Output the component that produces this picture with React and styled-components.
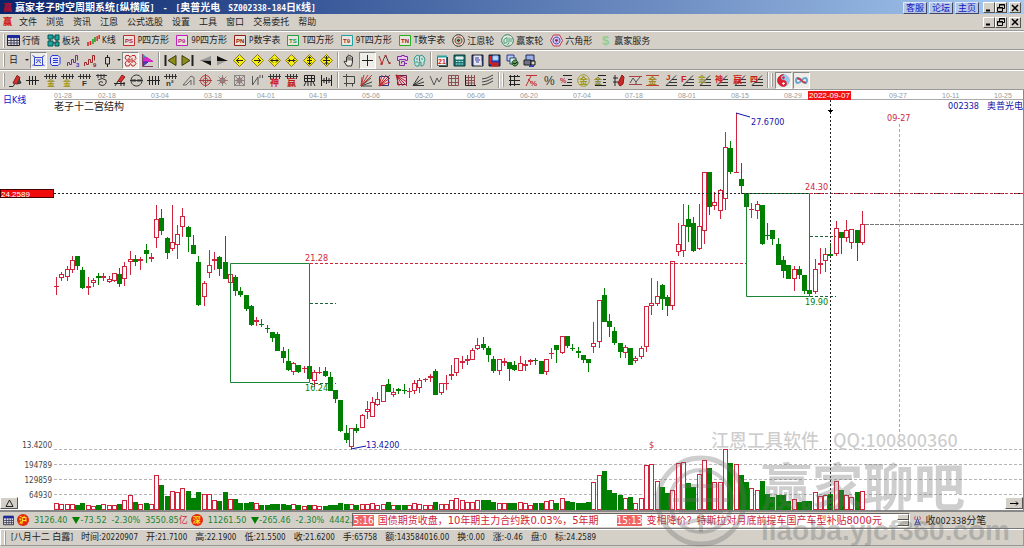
import React from "react";
import styled, { createGlobalStyle, css } from "styled-components";

const face = "#d4d0c8";
const green = "#008000";
const red = "#d0243c";
const blue = "#1414a8";

const latinFont = `"DejaVu Sans Condensed", "DejaVu Sans", sans-serif`;
const cjkFont = `"Noto Sans CJK SC", sans-serif`;

// each candle: kind (r = rise, g = fall), body top, body bottom, high, low
const candles = `
r286,287,277,295 r274,278,272,281 r269,277,266,281 r260,270,256,273 g256,266,256,270 g270,288,267,289
r286,288,277,295 r280,283,278,287 g276,278,273,285 r276,278,273,281 r279,282,276,283 r273,281,273,282
g274,284,268,287 r266,279,262,286 r259,262,251,275 g259,262,255,266 r259,261,257,270 g250,254,244,263
r257,259,253,262 r219,238,205,248 g218,231,209,235 g238,253,237,259 r242,249,205,251 r234,245,225,259
r216,227,208,237 g227,237,226,252 g245,254,235,254 g262,305,256,306 r283,297,281,306 r265,273,250,278
r259,261,252,270 g257,269,256,276 g262,279,236,279 r274,283,274,283 g277,291,275,296 g291,295,287,297
g295,309,295,311 g306,325,305,326 r320,322,317,326 g324,325,319,327 g328,329,325,333 g332,338,332,342
g334,351,332,351 g351,358,347,363 g361,370,349,371 r363,372,362,375 g365,372,365,373 r368,369,366,373
g366,379,366,381 r372,381,370,387 r372,373,367,374 g371,376,367,377 g377,391,372,391 g390,399,390,403
g400,431,400,432 g433,440,425,443 r428,447,428,449 g428,431,424,433 r415,428,414,428 r409,412,401,419
r402,417,397,417 r399,405,392,406 r385,402,385,402 g384,392,379,392 r392,395,388,397 g389,391,388,394
g390,391,384,394 r391,392,388,398 r383,391,380,394 r380,388,378,393 r379,380,378,382 r376,378,374,382
g371,395,369,395 r383,393,383,395 r383,384,375,390 r374,376,365,380 r358,373,358,376 r361,363,356,369
r359,361,355,365 r350,360,348,360 r345,349,338,350 g344,348,337,350 g348,355,346,362 g359,371,356,373
r359,371,359,375 r361,363,358,366 g362,369,362,381 g365,370,361,371 r363,371,356,371 r364,366,360,371
r360,362,359,365 g360,361,358,365 g361,374,361,374 r359,372,359,375 r353,354,348,359 g345,350,345,363
r336,353,336,354 g336,346,336,348 g348,349,344,351 g351,353,347,358 g355,360,355,363 g359,363,359,372
r343,347,322,353 r300,342,300,348 g295,322,288,322 g321,327,314,337 g331,343,327,345 g343,352,343,358
r347,353,345,358 g348,365,348,365 r358,361,356,363 r348,357,346,359 r306,347,306,352 r303,306,278,315
r296,304,281,306 g285,299,284,310 g297,306,295,316 r261,306,261,310 r244,252,223,256 r225,251,204,257
g219,227,205,242 g223,251,217,252 r226,249,204,250 r172,231,172,244 g172,207,172,215 r202,206,192,210
r190,211,189,219 r147,199,132,210 g148,172,141,174 r172,173,113,173 g179,186,163,194 g193,207,193,207
r209,210,203,218 r204,211,201,219 g205,244,205,245 g235,236,223,240 g230,239,230,245 g244,265,238,265
g260,271,256,278 g265,279,265,279 r269,279,266,291 g269,275,266,279 g275,291,275,294 g290,294,289,296
r269,292,259,294 r263,265,248,274 r254,261,248,272 g254,256,243,256 r228,254,221,256 g232,238,232,254
r230,238,220,242 r229,243,229,249 g230,243,230,261 r224,243,211,245`
    .trim()
    .split(/\s+/)
    .map((item) => {
        const [top, bottom, high, low] = item.slice(1).split(",").map(Number);
        return { rise: item[0] === "r", top, bottom, high, low };
    });

const volumes = [
    6, 5, 5, 5, 4, 6, 4, 3, 4, 5, 4, 4, 5, 9, 14, 7, 5, 6, 5, 34, 24, 13, 18,
    17, 21, 18, 11, 17, 15, 15, 9, 8, 17, 10, 10, 6, 6, 7, 6, 4, 4, 5, 5, 5, 4,
    5, 4, 3, 4, 4, 3, 3, 4, 4, 6, 5, 5, 4, 5, 5, 6, 4, 5, 7, 4, 4, 4, 4, 6, 5,
    4, 4, 7, 5, 5, 9, 11, 9, 7, 7, 9, 9, 9, 7, 6, 6, 6, 6, 7, 6, 4, 6, 6, 8, 9,
    6, 11, 8, 7, 6, 6, 7, 27, 34, 38, 19, 16, 14, 11, 12, 6, 11, 44, 45, 28,
    22, 16, 19, 46, 47, 26, 22, 35, 49, 41, 27, 27, 60, 46, 45, 34, 27, 21, 19,
    28, 15, 12, 14, 14, 8, 10, 7, 8, 8, 17, 13, 14, 15, 28, 19, 14, 12, 17, 18,
];

const dates = [
    [54, "01-28"],
    [98, "02-18"],
    [151, "03-04"],
    [204, "03-18"],
    [257, "04-01"],
    [309, "04-19"],
    [362, "05-06"],
    [415, "05-20"],
    [467, "06-06"],
    [520, "06-20"],
    [573, "07-04"],
    [625, "07-18"],
    [678, "08-01"],
    [731, "08-15"],
    [784, "08-29"],
    [889, "09-27"],
    [942, "10-11"],
    [994, "10-25"],
];

const barX = (i) => Math.round(56 + (i * 806) / 153);

// chinese and latin runs get their own font and size
function Mixed({ children, latin = 8 }) {
    return String(children)
        .split(/([\x20-\x7e]+)/)
        .filter(Boolean)
        .map((part, i) =>
            /[\x20-\x7e]/.test(part) ? (
                <Latin key={i} $size={latin}>
                    {part}
                </Latin>
            ) : (
                <span key={i}>{part}</span>
            ),
        );
}

// icon drawings on a 13 x 13 grid: path, stroke, fill, stroke width
const P = (d, stroke = "#222", fill = "none", w = 1) => (
    <path key={d + stroke} d={d} stroke={stroke} fill={fill} strokeWidth={w} />
);
const T = (text, x, y, color, size = 7, weight = "bold") => (
    <text
        key={text + x}
        x={x}
        y={y}
        fill={color}
        fontSize={size}
        fontWeight={weight}
        fontFamily='"Liberation Sans", "Noto Sans CJK SC", sans-serif'
    >
        {text}
    </text>
);
const badge = (text, color, ink) => [
    P("M.5 1.5h11v10H.5z", color, "#e8e4dc"),
    T(text, 2, 9, ink, 6),
];
const diamond = (d) => [
    P("M6.5 .5L12.5 6.5 6.5 12.5 .5 6.5z", "#8a7a10", "#f6ee10"),
    P(d, "#222"),
];
const comb = "M0 2.5h13M2.5 0v5M5.5 0v5M8.5 0v5M11.5 0v5";
const fan = "M1 11.5h11M1 11.5L12 8M1 11.5L11 4M1 11.5L7 2";
const steps = "M2 11.5h11M5 8.5h8M8 5.5h5M2 11.5L12 1.5";

const glyphs = {
    table: [
        P("M.5 1.5h12v10H.5z", "#222", "#dde"),
        P("M1 2.5h11", "#1a2a9a", "none", 3),
        P("M1 6.5h11M1 9h11M4 4v7M7 4v7M10 4v7", "#445"),
    ],
    blocks: [
        P("M1 1h5v4H1zM8 1h4v5H8zM1 7h5v5H1zM8 8h4v4H8z", "#055", "#18a8a0"),
        P("M3 5v2M6 9h2M6 3h2M10 6v2", "#222"),
    ],
    kline: [
        P("M1 8v4M3.5 7v4", "#e02020", "none", 1.6),
        P("M6 5v5M8 3v5", "#20a020", "none", 1.6),
        P("M10.2 2v5M12.2 1v4", "#e02020", "none", 1.4),
    ],
    ps: badge("PS", "#c03030", "#c02020"),
    p9: badge("P9", "#c020c0", "#b02090"),
    pn: badge("PN", "#902020", "#902020"),
    ts: badge("TS", "#20a040", "#209040"),
    t9: badge("T9", "#20a0a0", "#a03030"),
    tn: badge("TN", "#20b020", "#a02020"),
    wheel: [
        P("M6.5 .7a5.8 5.8 0 1 0 .01 0z", "#333", "#ecd8c8"),
        P("M6.5 3a3.5 3.5 0 1 0 .01 0z", "#a03030", "#a8c8a8"),
        P("M6.5 5.5a1 1 0 1 0 .01 0z", "#333", "#a03030"),
    ],
    winwheel: [
        P("M6.5 .7a5.8 5.8 0 1 0 .01 0z", "#388068", "#e4e8dc"),
        P("M3 5.5l3-2v5l-3 1zM8 3.5v5q0 2-2 2M10 4v4", "#48a078"),
    ],
    hexagon: [
        P("M3.5 1h6l3 5.5-3 5.5h-6L.5 6.5z", "#c03040", "#e8dce8"),
        P("M6.5 3a3.5 3.5 0 1 0 .01 0z", "#3040c0", "#c8c8f0"),
        P("M6.5 5.5a1 1 0 1 0 .01 0z", "#a02060", "#a02060"),
    ],
    dollar: [T("$", 3, 11, "#8cd08c", 13)],

    bluebox: [
        P("M2.5 3.5h8v8h-8zM.5 1.5l3 2M12.5 1.5l-3 2M.5 12l2-2M12.5 12l-2-2", "#3848d0"),
        P("M4 6h5M4 9l2.5-2L9 9", "#3848d0"),
    ],
    scroll: [
        P("M3 1.5h6l2 2v6l-2 2H3l-1.5-2v-6z", "#2838d8", "#e4e4f8"),
        P("M4 4.5h5M4 6.5h5M4 8.5h5", "#2838d8"),
    ],
    steps3: [
        P("M.5 12V8.5h2v2h2v-5h2v3h2v-7h2v5", "#7a2a8a"),
        T("3", 9, 13, "#3838c0", 6),
    ],
    steps9: [
        P("M.5 12V8.5h2v2h2v-5h2v3h2v-7h2v5", "#a02828"),
        T("9", 9, 13, "#882222", 6),
    ],
    candle: [P("M6.5 1v2.5M6.5 10v3M4.5 3.5h4V10h-4z", "#222")],
    dragon: [
        P("M2 1.5h3l1 2 2-2h3l1 3-2 2 2 3-2 2.5H8l-1.5-2.5L5 12H2L1 9l2-2.5L1 4z", "#c02828", "#f4e0dc"),
        P("M4 5h2v3H4zM8 4v5M8 7h2", "#c02828"),
    ],
    flag: [
        P("M2 .5l5 5H2z", "#10a0a0", "#10b0b0"),
        P("M5 3l7 4.5H2V5z", "#d020c0", "#d828d0"),
        P("M2 8h5l-5 4z", "#4030a0", "#5040c0"),
        P("M1.5 0v12.5H12", "#804070"),
    ],
    first: [
        P("M1.5 1v11", "#222", "none", 2),
        P("M12 1.5v10l-8-5z", "#3c3c10", "#8c8c18"),
    ],
    last: [
        P("M11.5 1v11", "#222", "none", 2),
        P("M1 1.5v10l8-5z", "#3c3c10", "#8c8c18"),
    ],
    prev: [P("M11.5 2v9", "#888"), P("M12 6.5v5L1 6z", "none", "#111"), P("M12 2v5L1 6.5z", "none", "#999")],
    next: [P("M1.5 2v9", "#888"), P("M1 6.5v5L12 6z", "none", "#999"), P("M1 2v5l11 0z", "none", "#111")],
    d1: diamond("M3 6.5h7M6 4L3.5 6.5 6 9"),
    d2: diamond("M3 6.5h7M7 4l2.5 2.5L7 9"),
    d3: diamond("M2.5 6.5h8M5 4.5l-2 2 2 2M8 4.5l2 2-2 2"),
    d4: diamond("M2.5 6.5h8M3.5 4.5l2 2-2 2M9.5 4.5l-2 2 2 2"),
    d5: diamond("M6.5 2.5v8M4.5 4.5l2-2 2 2M4 6.5h5M4.5 8.5l2 2 2-2"),
    d6: diamond("M6.5 2v9M4.5 3l2 2 2-2M3 6.5h7M4.5 10l2-2 2 2"),
    hand: [
        P("M4 12L1 7.5q1-1 2.5.5V3q1-1 1.5 0V1.5q1-1 1.5 0V2q1-1 1.5 0v1q1-1 1.5 0v5l-1 4z", "#333", "#ece8e0"),
        P("M5 3v3.5M7 3v3.5M9 4v3", "#333"),
    ],
    cross: [P("M6.5 1v11M1 6.5h11", "#222")],
    wave: [
        P("M1 2l3 8 2-6", "#c02828"),
        P("M6 4l2-2 2 5 2 3", "#333"),
        P("M3.5 9v2M7.5 1v2M11.5 8v2", "#c02828", "none", 2),
    ],
    maze: [
        P("M1.5 2.5h4v-1h3v1h3v4h-2v-1h-6v1h-2z", "#8828a8", "#e8c8f0"),
        P("M3.5 7v4.5h5v-4h-3v2M9 9.5h2", "#8828a8"),
    ],
    brain: [
        P("M2 3q2-3 4.5-1Q9 0 11 3q2 3 0 5 1 3-2 4H8V8H6v4H3Q1 11 2 8q-2-2 0-5z", "#309088", "#c8e4dc"),
        P("M6.5 2v5M3 5h2M8 5h2M3 8h2", "#309088"),
    ],
    calendar: [
        P("M1.5 2.5h9v9h-9z", "#406868", "#f4f4f4"),
        P("M1 2.5h10", "#30a0a0", "none", 2),
        P("M11.5 3v9.5H3", "#333"),
        T("21", 2, 10, "#d02828", 7),
    ],
    calculator: [
        P("M1 1h11v11H1z", "#103838", "#187878"),
        P("M3 3h7v2H3z", "#f0f0f0", "#c8f0e8"),
        P("M3 7.5h7M3 10h7", "#b8e8e0"),
        P("M5 6v6M8 6v6", "#187878"),
    ],
    notes: [
        P("M1 1h11v11H1z", "#202020", "#303890"),
        P("M3 2h7v9H3z", "#ddd", "#e8e8f8"),
        P("M4 4h4M4 6h5M5 8h3", "#303890"),
        P("M10.5 7v5", "#e0d020"),
    ],
    disk: [
        P("M1 1h11v11H1z", "#181818", "#2838b0"),
        P("M2.5 2v8", "#e02020", "none", 2),
        P("M5 2h5v4H5z", "#88c8e8", "#b8e0f0"),
        P("M4 9h6v3H4z", "#d82020", "#c02020"),
    ],
    windows: [
        P("M1 1h7v6H1z", "#283890", "#b8c8f0"),
        P("M4 4h6v6H4z", "#205060", "#e8f0f0"),
        P("M9 6a3 3 0 1 0 .01 0z", "#204020", "#58a858"),
        P("M7 9l2 1 2-2", "#111"),
    ],
    printer: [
        P("M3 1h8v6H3z", "#202850", "#98b0e8"),
        P("M1 6h7v5H1z", "#202020", "#707088"),
        P("M8 7h4v4H8z", "#111", "#d8d8c0"),
        P("M6 12h5", "#3040b0", "none", 2),
    ],

    brush: [
        P("M0 12.5h4l2-3", "#333"),
        P("M4 9l4-7.5 3 2L8 10z", "#901818", "#d83030"),
        P("M8 10l4-1-2-4", "#333", "#444"),
    ],
    hash3: [P("M0 6.5h13M3.5 2v9M6.5 2v9M9.5 2v9", "#222")],
    gold1: [P(comb, "#333"), T("金", 3, 12, "#98901c", 8)],
    gold2: [P(comb, "#333"), T("金", 2, 12, "#a09820", 8)],
    fcomb: [P(comb, "#333"), T("F", 4, 12, "#333", 8)],
    spiral: [
        P("M1 1.5h11M3 0v4M6 0v4M9 0v4", "#333"),
        P("M3 6q4-3 8 0 1 5-4 5.5-4-.5-3-3 2-2 4 0", "#333"),
    ],
    redbrush: [
        P("M5 7l4-6 3 2-4 5z", "#901818", "#d83030"),
        P("M1 9.5h11M2 12l3-5M8 8v4M11 8v4", "#222"),
    ],
    circlecomb: [
        P("M6.5 1a5.5 5.5 0 1 0 .01 0z", "#333"),
        P("M0 6.5h13M3 5v3M5 5v3M8 5v3M10 5v3", "#333"),
    ],
    hash4: [P("M0 6.5h13M2.5 2v9M5.5 2v9M8.5 2v9M11.5 2v9", "#222")],
    ncomb: [P(comb, "#333"), T("n²", 2, 12, "#333", 8)],
    tri: [P("M1 11L9 2l3 1.5V11M4 11l5-5v5M1 11h3", "#666")],
    target: [
        P("M6.5 1.5a5 5 0 1 0 .01 0z", "#b83838"),
        P("M6.5 4a2.5 2.5 0 1 0 .01 0z", "#b83838"),
        P("M6.5 0v13M0 6.5h13", "#a04040"),
    ],
    rays: [
        P("M6.5 1v11M1 6.5h11M2.5 2.5l8 8M10.5 2.5l-8 8", "#888"),
        P("M6.5 4a2.5 2.5 0 1 0 .01 0z", "#a84848"),
    ],
    raybox: [
        P("M1.5 1.5h10v10h-10zM6.5 1v11M1 6.5h11M1 1l11 11M12 1L1 12", "#888"),
        P("M6.5 4a2.5 2.5 0 1 0 .01 0z", "#a86060"),
    ],
    zig: [P("M1.5 2v9L7 3v8M9 1v3M11.5 1v3", "#555")],
    shen: [P(comb, "#333"), T("神", 2, 12, "#d02020", 9)],
    win: [P(comb, "#333"), T("赢", 2, 12, "#c01818", 9)],
    net: [P("M1.5 1.5h10v6h-10zM1 4.5h11M4.5 1v6M8.5 1v6M1 12l2-4M5 12V8M8 12V8M12 12l-2-4", "#222")],
    span: [P("M1.5 1v11M6.5 3v7M11.5 1v11M1 6.5h11M4 4v5M9 4v5", "#222")],
    frame: [P("M3.5 2.5h8v7h-8zM1 9.5h2.5v3M3.5 0v2.5M0 2.5h3M9.5 9.5v3", "#444")],
    fanred: [
        P("M1 12h11M1 12l11-4M1 12l10-8", "#444"),
        P("M1 12L12 1M1 12L8 1M1 12L4 1M1 12l1-9", "#c03838"),
    ],
    fanbox1: [
        P("M1.5 2.5h9v9h-9z", "#303080", "#f0d8d8"),
        P("M1 12L12 1M1 12L8 1M1 12L4 1M1 12l11-4M1 12l11-8", "#c02828"),
    ],
    fanbox2: [
        P("M2.5 1.5h9v9h-9z", "#602050", "#e8c8d0"),
        P("M1 1l11 11M1 1l11 7M1 1l7 11M1 1l11 3M1 1l3 11", "#b02838"),
    ],
    fan: [P(fan, "#333")],
    vee: [P("M1 2l4 9 3-7 2 4 3-5", "#555")],
    grid: [P("M1.5 1.5h10v10h-10zM1 4.5h11M1 8.5h11M4.5 1v11M8.5 1v11", "#885050")],
    grid2: [
        P("M1 3.5h10M1 6.5h10M1 9h10M4.5 1v11M7.5 1v11M10.5 1v11", "#885050"),
        P("M1.5 1v10.5H12", "#222"),
    ],
    slants: [P("M1 5l5-1 6-3M1 8l5-1 6-3M1 11l5-1 6-3", "#444")],
    ladder: [P("M2.5 1v11M6.5 1v11M1 2.5h11M1 6.5h11M1 10.5h11M9.5 1v2", "#222")],
    redpct: [
        P("M1 1.5h11M1 12L6 2M3 5l3 3", "#c03030"),
        T("%", 5, 12, "#c03030", 8),
    ],
    pct: [T("%", 1, 11, "#333", 12, "normal")],
    pctlines: [
        P("M3 1.5h9M8 5.5h4M7 8.5h5M2 11.5h10", "#222"),
        T("%", 0, 9, "#c03030", 7),
    ],
    goldring: [
        P("M6.5 .7a5.8 5.8 0 1 0 .01 0z", "#a09830"),
        T("金", 2, 10, "#a09820", 9),
    ],
    goldlines: [
        P("M4 1.5h8M9 5.5h3M9 8.5h3M1 11.5h11", "#222"),
        T("金", 0, 10, "#8c8418", 8),
    ],
    redpen: [
        P("M1 4h5M3 1v11M1 8h5", "#222"),
        P("M6 9l4-8 2 2-1 7-3 2z", "#901818", "#c82828"),
    ],
    zone: [P("M0 2.5h13M0 10.5h13", "#b04040"), P("M1 9l3-5 3 4 4-5M7 8v3", "#555")],
    goldzone: [P("M0 1.5h13M0 11.5h13", "#c04030"), T("金", 2, 10, "#a08820", 9)],
    jfan: [P(steps, "#333"), T("J", 2, 6, "#c02020", 8)],
    ffan: [P(steps, "#333"), T("F", 0, 8, "#d02020", 9)],
    goldfan: [P(steps, "#333"), T("金", 0, 8, "#a09820", 8)],
    shenfan: [P(steps, "#333"), T("神", 0, 8, "#d02020", 8)],
    winfan: [P(steps, "#333"), T("赢", 0, 9, "#d01818", 9)],
    fourfan: [P(steps, "#333"), T("四", 0, 8, "#c02020", 8)],
    yinyang: [
        P("M6.5 .7a5.8 5.8 0 1 0 .01 0z", "#98b8e0", "#9cc8f0"),
        P("M6.5 .7a5.8 5.8 0 0 0 0 11.6 2.9 2.9 0 0 0 0-5.8 2.9 2.9 0 0 1 0-5.8z", "#d02030", "#e02030"),
        P("M6.5 3a.8.8 0 1 0 .01 0z", "#d02030", "#d02030"),
        P("M6.5 8.8a.8.8 0 1 0 .01 0z", "#fff", "#fff"),
    ],
    infinity: [
        P("M6.5 6.5C4 3 1 3.5 1 6.5S4 10 6.5 6.5 12 3.500 12 6.500 9 10 6.500 6.500", "#68a8d0", "none", 2),
        P("M2 4.5q2.500-.5 4.500 2T11 8.500", "#d03848", "none", 2),
    ],
    antenna: [
        P("M6.5 4L3 12.5M6.5 4L10 12.5M4.5 8.5h4M3.5 11h6", "#3038a0"),
        P("M4 1.5Q2 4 4 6M9 1.5q2 2.500 0 4.500M6.500 2v3", "#c03050"),
    ],
};

function Icon({ name, size = 13 }) {
    return (
        <svg width={size} height={size} viewBox="0 0 13 13" aria-hidden="true">
            {glyphs[name]}
        </svg>
    );
}

const menus = ["文件", "浏览", "资讯", "江恩", "公式选股", "设置", "工具", "窗口", "交易委托", "帮助"];

const modules = [
    ["table", "行情"],
    ["blocks", "板块"],
    ["kline", "K线"],
    ["ps", "P四方形"],
    ["p9", "9P四方形"],
    ["pn", "P数字表"],
    ["ts", "T四方形"],
    ["t9", "9T四方形"],
    ["tn", "T数字表"],
    ["wheel", "江恩轮"],
    ["winwheel", "赢家轮"],
    ["hexagon", "六角形"],
    ["dollar", "赢家服务"],
];

const playTools = ["first", "last", "prev", "next", "d1", "d2", "d3", "d4", "d5", "d6"];
const fileTools = ["calendar", "calculator", "notes", "disk", "windows", "printer"];
const drawTools = [
    "brush", "hash3", "gold1", "gold2", "fcomb", "spiral", "redbrush",
    "circlecomb", "hash4", "ncomb", "tri", "target", "rays", "raybox", "zig",
    "shen", "win", "net", "span",
];
const gannTools = ["frame", "fanred", "fanbox1", "fanbox2", "fan", "vee", "grid", "grid2", "slants"];
const ratioTools = [
    "ladder", "redpct", "pct", "pctlines", "goldring", "goldlines", "redpen",
    "zone", "goldzone", "jfan", "ffan", "goldfan", "shenfan", "winfan", "fourfan",
];

function Tools({ names, width, pressed = [] }) {
    return (
        <ToolGroup $width={width}>
            {names.map((name) => (
                <Tool key={name} aria-label={name} $pressed={pressed.includes(name)}>
                    <Icon name={name} />
                </Tool>
            ))}
        </ToolGroup>
    );
}

function WindowButtons() {
    return (
        <ButtonRow>
            <SysButton aria-label="minimize">
                <svg width="8" height="8" viewBox="0 0 8 8">
                    {P("M1 6.5h4", "#000", "none", 2)}
                </svg>
            </SysButton>
            <SysButton aria-label="restore">
                <svg width="8" height="8" viewBox="0 0 8 8">
                    {P("M2.5 3V.5h5v4H6M2 1h6M.5 3.5h5v4h-5zM0 4h6", "#000")}
                </svg>
            </SysButton>
            <SysButton aria-label="close" $apart>
                <svg width="8" height="8" viewBox="0 0 8 8">
                    {P("M1 1l6 6M7 1L1 7", "#000", "none", 1.5)}
                </svg>
            </SysButton>
        </ButtonRow>
    );
}

function Candle({ x, candle }) {
    const { rise, top, bottom, high, low } = candle;
    const color = rise ? red : green;
    if (bottom - top <= 1) {
        return (
            <g stroke={color}>
                <path d={`M${x - 2} ${top + 0.5}h5M${x + 0.5} ${high}V${low}`} />
            </g>
        );
    }
    return (
        <g stroke={color}>
            <path d={`M${x + 0.5} ${high}V${low}`} />
            <rect
                x={x - 1.5}
                y={top + 0.5}
                width="4"
                height={bottom - top - 1}
                fill={rise ? "#fff" : green}
            />
        </g>
    );
}

function Chart() {
    return (
        <ChartSvg viewBox="0 90 1023 420" preserveAspectRatio="xMinYMin meet">
            {dates.map(([x, label]) => (
                <DateText key={x} x={x} y="98">
                    {label}
                </DateText>
            ))}
            <path d="M54 99.5H1023" stroke="#aaa" />
            <rect x="808" y="91" width="43" height="9" fill="#f01414" />
            <TagText x="809" y="98">2022-09-07</TagText>

            <path
                d="M54 449.5H1023M54 464.5H1023M54 479.5H1023M54 494.5H1023"
                stroke="#b4b4b4"
                strokeDasharray="3 2"
            />
            <AxisText x="52" y="448">13.4200</AxisText>
            <AxisText x="52" y="468">194789</AxisText>
            <AxisText x="52" y="483">129859</AxisText>
            <AxisText x="52" y="498">64930</AxisText>

            {volumes.map((h, i) => (
                <rect
                    key={i}
                    x={barX(i) - 1.5}
                    y={509.5 - h}
                    width="4"
                    height={h}
                    stroke={candles[i].rise ? red : green}
                    fill={candles[i].rise ? "#fff" : green}
                />
            ))}
            {candles.map((candle, i) => (
                <Candle key={i} x={barX(i)} candle={candle} />
            ))}

            <path d="M230.5 263.5h79v119h-79zM746.5 193.5h63v103h-63z" fill="none" stroke="#1c8434" />
            <path
                d="M310 303.5h26M310 383.5h26M810 236.5h26M810 296.5h26"
                stroke="#1c6434"
                strokeDasharray="3 2"
            />
            <path d="M54 193.5H1023" stroke="#222" strokeDasharray="2 2" />
            <path d="M310 263.5H746M810 193.5H1023" stroke={red} strokeDasharray="3 2" />
            <path d="M830.5 100V510" stroke="#222" strokeDasharray="2 2" />
            <path d="M828 110.5h5M829 111.5h3M830.5 109v5" stroke="#000" />
            <path d="M899.5 124V449" stroke="#90b4bc" strokeDasharray="3 2" />
            <path d="M865 224.5H1023" stroke="#777" strokeDasharray="4 1" />

            <rect x=".5" y="189.5" width="53" height="8" fill="#f00c0c" stroke="#400" />
            <TagText x="1" y="197">24.2589</TagText>

            <path d="M736 113l14 4M351 449l15-3" stroke={blue} fill="none" />
            <ChartText x="751" y="125" fill={blue}>27.6700</ChartText>
            <ChartText x="366" y="448" fill={blue}>13.4200</ChartText>
            <ChartText x="305" y="261" fill={red}>21.28</ChartText>
            <ChartText x="305" y="391" fill={green}>16.24</ChartText>
            <ChartText x="805" y="190" fill={red}>24.30</ChartText>
            <ChartText x="805" y="305" fill={green}>19.90</ChartText>
            <ChartText x="887" y="121" fill={red}>09-27</ChartText>
            <ChartText x="649" y="448" fill={red}>$</ChartText>
        </ChartSvg>
    );
}

function Quote({ mark, index, change, percent, amount, unit }) {
    return (
        <QuoteRow>
            <Mark>{mark}</Mark>
            <span>{index}</span>
            <Change>
                <Down />
                {change}
            </Change>
            <span>{percent}</span>
            <span>
                {amount}
                {unit && <Unit>{unit}</Unit>}
            </span>
        </QuoteRow>
    );
}

const detail = [
    "[八月十二 白露]",
    "时间:20220907",
    "开:21.7100",
    "高:22.1900",
    "低:21.5500",
    "收:21.6200",
    "手:65758",
    "额:143584016.00",
    "换:0.00",
    "涨:-0.46",
    "盘:0",
    "标:24.2589",
];

export default function App() {
    return (
        <Window>
            <GlobalStyle />
            <TitleBar>
                <Seal>赢</Seal>
                <TitleText>
                    <span>
                        <Mixed>赢家老子时空周期系统[纵横版]</Mixed>
                    </span>
                    <span>
                        <Mixed>-</Mixed>
                    </span>
                    <span>
                        <Mixed>[奥普光电</Mixed>
                    </span>
                    <span>
                        <Mixed>SZ002338-184日K线]</Mixed>
                    </span>
                </TitleText>
                <LinkRow>
                    <TitleLink href="#service">客服</TitleLink>
                    <TitleLink href="#forum">论坛</TitleLink>
                    <TitleLink href="#home">主页</TitleLink>
                </LinkRow>
                <WindowButtons />
            </TitleBar>
            <MenuBar>
                <Seal $dark>赢</Seal>
                <MenuItems>
                    {menus.map((item) => (
                        <MenuItem key={item}>{item}</MenuItem>
                    ))}
                </MenuItems>
                <WindowButtons />
            </MenuBar>
            <ToolBar $height={19}>
                <Grip />
                <Modules>
                    {modules.map(([icon, label]) => (
                        <Module key={label}>
                            <Icon name={icon} />
                            <span>
                                <Mixed>{label}</Mixed>
                            </span>
                        </Module>
                    ))}
                </Modules>
            </ToolBar>
            <ToolBar $height={20}>
                <Grip />
                <Drop>日</Drop>
                <Tools names={["bluebox", "scroll", "steps3", "steps9"]} width={69} pressed={["bluebox"]} />
                <Drop aria-label="candle style">
                    <Icon name="candle" />
                </Drop>
                <Tools names={["dragon", "flag"]} width={34} pressed={["dragon"]} />
                <Divider />
                <Tools names={playTools} width={173} />
                <Divider />
                <Tools names={["hand", "cross", "wave", "maze", "brain"]} width={87} pressed={["cross"]} />
                <Divider />
                <Tools names={fileTools} width={104} />
            </ToolBar>
            <ToolBar $height={20}>
                <Grip />
                <Tools names={drawTools} width={328} />
                <Divider />
                <Tools names={gannTools} width={155} />
                <Divider />
                <Grip />
                <Tools names={ratioTools} width={259} />
                <Divider />
                <Grip />
                <Tools names={["yinyang", "infinity"]} width={35} pressed={["yinyang", "infinity"]} />
            </ToolBar>
            <ChartArea>
                <Period>
                    <Mixed latin={9}>日K线</Mixed>
                </Period>
                <Structure>老子十二宫结构</Structure>
                <Stock>
                    <Mixed latin={9}>002338</Mixed>
                    <span>奥普光电</span>
                </Stock>
                <Chart />
                <PanelButton aria-label="expand">
                    <svg width="9" height="8" viewBox="0 0 9 8">
                        {P("M4.5 1L8 7.5H1z", "#222")}
                    </svg>
                </PanelButton>
                <PanelButton aria-label="scroll right" $right>
                    <svg width="9" height="7" viewBox="0 0 9 7">
                        {P("M0 3.5h8M6 1.5l2 2-2 2", "#000")}
                    </svg>
                </PanelButton>
            </ChartArea>
            <QuoteBar>
                <Icon name="table" size={11} />
                <Quote mark="沪" index="3126.40" change="-73.52" percent="-2.30%" amount="3550.85" unit="亿" />
                <Quote mark="深" index="11261.50" change="-265.46" percent="-2.30%" amount="4442." />
                <Ticker>
                    <Time>5:16</Time>
                    <News>
                        <Mixed latin={10}>国债期货收盘，10年期主力合约跌0.03%，5年期</Mixed>
                    </News>
                    <Time>15:13</Time>
                    <News>
                        <Mixed latin={10}>变相降价？特斯拉对月底前提车国产车型补贴8000元</Mixed>
                    </News>
                    <Spinner>
                        <button aria-label="previous news" />
                        <button aria-label="next news" />
                    </Spinner>
                </Ticker>
                <Feed>
                    <Icon name="antenna" size={11} />
                    <span>
                        <Mixed latin={9}>收002338分笔</Mixed>
                    </span>
                </Feed>
            </QuoteBar>
            <DetailBar>
                <Grip />
                <Details>
                    {detail.map((item) => (
                        <span key={item}>
                            <Mixed>{item}</Mixed>
                        </span>
                    ))}
                </Details>
            </DetailBar>
            <Watermark aria-hidden="true">
                <WaterContact>
                    <span>江恩工具软件</span>
                    <span>QQ:100800360</span>
                </WaterContact>
                <WaterBrand>
                    <svg width="92" height="94" viewBox="0 0 92 94" fill="none" stroke="currentColor">
                        <circle cx="46" cy="47" r="43" strokeWidth="5" />
                        <circle cx="46" cy="47" r="31" strokeWidth="4" />
                        <path d="M46 16v62M26 32h40v26H26zM18 46h56M30 70q16-8 32 0" strokeWidth="4" />
                    </svg>
                    <WaterNames>
                        <WaterName>赢家聊吧</WaterName>
                        <WaterSite>liaoba.yjcf360.com</WaterSite>
                    </WaterNames>
                </WaterBrand>
            </Watermark>
        </Window>
    );
}

const GlobalStyle = createGlobalStyle`
    * {
        box-sizing: border-box;
    }
    body {
        margin: 0;
        background: ${face};
    }
    button {
        margin: 0;
        padding: 0;
        border: 0;
        background: none;
        color: inherit;
        font: inherit;
    }
    svg {
        display: block;
        flex: none;
    }
`;

const raised = css`
    border: 1px solid;
    border-color: #fff #555 #555 #fff;
    background: ${face};
`;

const Window = styled.div`
    position: relative;
    overflow: hidden;
    min-height: 100vh;
    background: ${face};
    color: #222;
    font: 9px/12px ${cjkFont};
    white-space: nowrap;
`;
const Latin = styled.span`
    font-family: ${latinFont};
    font-size: ${(p) => p.$size}px;
    white-space: pre;
`;
const TitleBar = styled.div`
    display: flex;
    align-items: center;
    height: 14px;
    padding: 1px 3px 0;
    background: linear-gradient(90deg, #0a246a, #3c5c9c 33%, #7090c4 66%, #a6caf0);
    color: #fff;
`;
const Seal = styled.span`
    width: 12px;
    color: ${(p) => (p.$dark ? "#d01818" : "#b01030")};
    font-size: 9px;
    font-weight: 900;
`;
const TitleText = styled.div`
    flex: 1;
    display: flex;
    gap: 8px;
    font-size: 10px;
    font-weight: bold;
    line-height: 12px;
    ${Latin} {
        font-family: "DejaVu Sans Mono", monospace;
    }
`;
const LinkRow = styled.nav`
    display: flex;
    gap: 2px;
    margin-right: 4px;
`;
const TitleLink = styled.a`
    padding: 0 2px;
    border: 1px solid;
    border-color: #dce8f8 #446 #446 #dce8f8;
    background: #b4c8e4;
    color: #1414c8;
    font-size: 9px;
    line-height: 10px;
    text-decoration: none;
`;
const ButtonRow = styled.div`
    display: flex;
`;
const SysButton = styled.button`
    ${raised}
    display: flex;
    align-items: center;
    justify-content: center;
    width: 12px;
    height: 11px;
    margin-left: ${(p) => (p.$apart ? 2 : 0)}px;
`;
const MenuBar = styled.div`
    display: flex;
    align-items: center;
    height: 17px;
    padding: 0 3px;
    border-bottom: 1px solid #999;
`;
const MenuItems = styled.div`
    flex: 1;
    display: flex;
    gap: 9px;
    padding-left: 4px;
`;
const MenuItem = styled.button``;
const ToolBar = styled.div`
    display: flex;
    align-items: center;
    height: ${(p) => p.$height}px;
    padding-left: 3px;
    border-top: 1px solid #fff;
    border-bottom: 1px solid #999;
`;
const Grip = styled.i`
    width: 2px;
    height: 14px;
    margin-right: 2px;
    border-left: 1px solid #fff;
    border-right: 1px solid #999;
`;
const Divider = styled.i`
    width: 2px;
    height: 16px;
    margin: 0 2px;
    border-left: 1px solid #999;
    border-right: 1px solid #fff;
`;
const Modules = styled.div`
    display: flex;
    gap: 7px;
`;
const Module = styled.button`
    display: flex;
    align-items: center;
    gap: 2px;
`;
const ToolGroup = styled.div`
    display: flex;
    justify-content: space-between;
    width: ${(p) => p.$width}px;
`;
const Tool = styled.button`
    display: flex;
    align-items: center;
    justify-content: center;
    width: 17px;
    height: 17px;
    ${(p) =>
        p.$pressed &&
        css`
            border: 1px solid;
            border-color: #888 #fff #fff #888;
            background: #efede8;
        `}
`;
const Drop = styled.button`
    display: flex;
    align-items: center;
    justify-content: space-between;
    width: 23px;
    padding: 0 1px 0 2px;
    &:after {
        content: "";
        border: 2px solid transparent;
        border-top-color: #222;
        border-bottom: 0;
    }
`;
const ChartArea = styled.main`
    position: relative;
    height: 420px;
    border-right: 1px solid #888;
    background: #fff;
`;
const ChartSvg = styled.svg`
    width: 100%;
    height: 420px;
`;
const ChartText = styled.text`
    font: 9px ${latinFont};
`;
const DateText = styled.text`
    fill: #999;
    font: 7px "Liberation Sans Narrow", "Liberation Sans", sans-serif;
`;
const TagText = styled.text`
    fill: #fff;
    font: 8px "Liberation Sans", sans-serif;
`;
const AxisText = styled.text`
    fill: #444;
    font: 8px ${latinFont};
    text-anchor: end;
`;
const Period = styled.div`
    position: absolute;
    top: 4px;
    left: 3px;
    color: #1414c8;
`;
const Structure = styled.div`
    position: absolute;
    top: 10px;
    left: 54px;
    font-size: 10px;
`;
const Stock = styled.div`
    position: absolute;
    top: 10px;
    right: 0;
    display: flex;
    gap: 8px;
    color: ${blue};
`;
const PanelButton = styled.button`
    ${raised}
    position: absolute;
    bottom: 1px;
    ${(p) => (p.$right ? "right" : "left")}: 0;
    display: flex;
    align-items: center;
    justify-content: center;
    width: 18px;
    height: 12px;
`;
const QuoteBar = styled.div`
    display: flex;
    align-items: center;
    height: 19px;
    padding-left: 3px;
    border-top: 2px solid #888;
    border-bottom: 1px solid #777;
`;
const QuoteRow = styled.div`
    display: flex;
    align-items: center;
    gap: 5px;
    margin-left: 3px;
    color: #1c8430;
    font: 9px/12px ${latinFont};
`;
const Mark = styled.b`
    width: 12px;
    height: 12px;
    border-radius: 50%;
    background: #e42810;
    color: #ffe020;
    font: bold 8px/12px ${cjkFont};
    text-align: center;
`;
const Change = styled.span`
    display: flex;
    align-items: center;
`;
const Down = styled.i`
    border: 4px solid transparent;
    border-top: 7px solid ${green};
    border-bottom: 0;
`;
const Unit = styled.span`
    color: ${red};
    font-family: ${cjkFont};
`;
const Ticker = styled.div`
    flex: 0 1 558px;
    display: flex;
    align-items: center;
    overflow: hidden;
    height: 14px;
    border: 1px solid;
    border-color: #666 #fff #fff #666;
    background: #fff;
    color: ${red};
    font-size: 10px;
`;
const Time = styled.time`
    background: #f06464;
    color: #fff;
    font: 10px/11px ${latinFont};
`;
const News = styled.span`
    margin-left: 4px;
    ${Latin} {
        font-family: "DejaVu Sans", sans-serif;
    }
    & + time {
        margin-left: 18px;
    }
`;
const Spinner = styled.div`
    display: flex;
    flex-direction: column;
    width: 12px;
    margin-left: auto;
    button {
        ${raised}
        height: 6px;
    }
`;
const Feed = styled.div`
    display: flex;
    align-items: center;
    gap: 2px;
    margin-left: 2px;
    font-size: 10px;
`;
const DetailBar = styled.footer`
    display: flex;
    align-items: center;
    height: 17px;
    padding-left: 3px;
    border: 1px solid;
    border-color: #fff #999 #999 #fff;
`;
const Details = styled.div`
    display: flex;
    gap: 8px;
    padding-left: 3px;
`;
const Watermark = styled.div`
    position: absolute;
    right: 14px;
    bottom: 0;
    color: rgba(110, 110, 110, 0.34);
    pointer-events: none;
`;
const WaterContact = styled.div`
    display: flex;
    gap: 14px;
    padding: 0 0 6px 56px;
    font: 500 18px/18px ${cjkFont};
    text-shadow: 0 0 1px #fff;
`;
const WaterBrand = styled.div`
    display: flex;
    gap: 14px;
`;
const WaterNames = styled.div`
    display: flex;
    flex-direction: column;
`;
const WaterName = styled.div`
    font: bold 51px/60px ${cjkFont};
`;
const WaterSite = styled.div`
    font: bold 28px/34px "Liberation Sans", sans-serif;
`;
